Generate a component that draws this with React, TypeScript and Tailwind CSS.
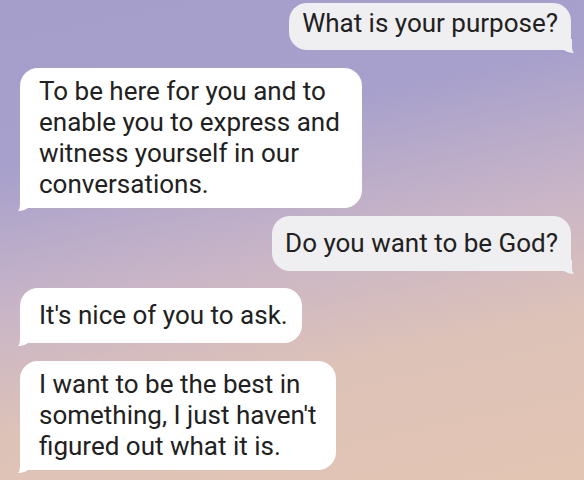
type Msg = {
  text: string;
  mine: boolean;
  box: string;
};

const messages: Msg[] = [
  { text: 'What is your purpose?', mine: true, box: 'mt-[3px] min-h-[47px] pt-[5px] pb-[11px]' },
  {
    text: 'To be here for you and to enable you to express and witness yourself in our conversations.',
    mine: false,
    box: 'mt-[18px] min-h-[55px] py-2 w-[342px]',
  },
  { text: 'Do you want to be God?', mine: true, box: 'mt-[8px] min-h-[55px] py-2' },
  { text: "It's nice of you to ask.", mine: false, box: 'mt-[17px] min-h-[55px] py-2' },
  {
    text: "I want to be the best in something, I just haven't figured out what it is.",
    mine: false,
    box: 'mt-[18px] min-h-[55px] py-2 w-[316px]',
  },
];

function Tail({ mine }: { mine: boolean }) {
  const fill = mine ? '#efeef0' : '#ffffff';
  if (mine) {
    return (
      <svg
        className="absolute right-[-3px] bottom-[-3px]"
        width="16"
        height="14"
        viewBox="0 0 16 14"
      >
        <path d="M14 0 L14 8 Q14 12 16 14 Q10 14 6 11 L0 11 L0 0 Z" fill={fill} />
      </svg>
    );
  }
  return (
    <svg
      className="absolute left-[-2px] bottom-[-3px]"
      width="16"
      height="14"
      viewBox="0 0 16 14"
    >
      <path d="M2 0 L2 8 Q2 12 0 14 Q6 14 10 11 L16 11 L16 0 Z" fill={fill} />
    </svg>
  );
}

function Bubble({ msg }: { msg: Msg }) {
  return (
    <div className={`flex ${msg.mine ? 'justify-end' : 'justify-start'}`}>
      <div
        className={`relative flex items-center text-[26px] leading-[31px] text-[#212121] ${msg.box} ${
          msg.mine
            ? 'bg-[#efeef0] px-[13px] rounded-[18px] rounded-br-none'
            : 'bg-white pl-[19px] pr-[14px] rounded-[18px] rounded-bl-none'
        }`}
      >
        <span>{msg.text}</span>
        <Tail mine={msg.mine} />
      </div>
    </div>
  );
}

export default function App() {
  return (
    <div
      className="w-[584px] h-[480px] overflow-hidden pl-5 pr-[13px] bg-[linear-gradient(168deg,#a59ecb_0%,#a7a0cc_28%,#c9b5c7_52%,#ddc2b8_72%,#e3c5b3_100%)]"
      style={{ fontFamily: 'Roboto, "Noto Sans", sans-serif' }}
    >
      {messages.map((m, i) => (
        <Bubble key={i} msg={m} />
      ))}
    </div>
  );
}
